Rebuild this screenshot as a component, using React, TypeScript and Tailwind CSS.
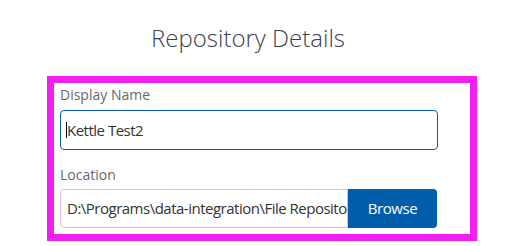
const font = "font-['Open_Sans',sans-serif]";

export default function App() {
  return (
    <div className={`${font} w-[530px] h-[246px] bg-white overflow-hidden`}>
      <div className="pt-[23px] w-[496px] text-center text-[24px] leading-[30px] font-light text-[#3a424c]">
        Repository Details
      </div>
      <div className="mt-[23px] ml-[47px] w-[430px] h-[165px] border-[7px] border-[#f21ff2] pl-[6px] pt-[2px]">
        <div className="text-[14px] leading-[20px] text-[#666a6e]">Display Name</div>
        <div className="mt-[5px] w-[378px] h-[40px] rounded-[4px] border-[1.5px] border-[#0a5ea8] flex items-center pl-[5px]">
          <span className="w-px h-[16px] bg-black" />
          <span className="text-[15px] tracking-[-0.5px] text-[#333]">Kettle Test2</span>
        </div>
        <div className="mt-[15px] text-[14px] leading-[20px] text-[#666a6e]">Location</div>
        <div className="mt-[4px] w-[377px] h-[39px] flex">
          <div className="w-[288px] shrink-0 rounded-l-[4px] border border-[#cccccc] flex items-center pl-[6px] overflow-hidden whitespace-nowrap text-[15px] tracking-[-0.5px] text-[#333]">
            {"D:\\Programs\\data-integration\\File Repository"}
          </div>
          <button className="flex-1 rounded-r-[4px] bg-[#005dab] text-white text-[15px] tracking-[-0.4px] flex items-center justify-center">
            Browse
          </button>
        </div>
      </div>
    </div>
  );
}
